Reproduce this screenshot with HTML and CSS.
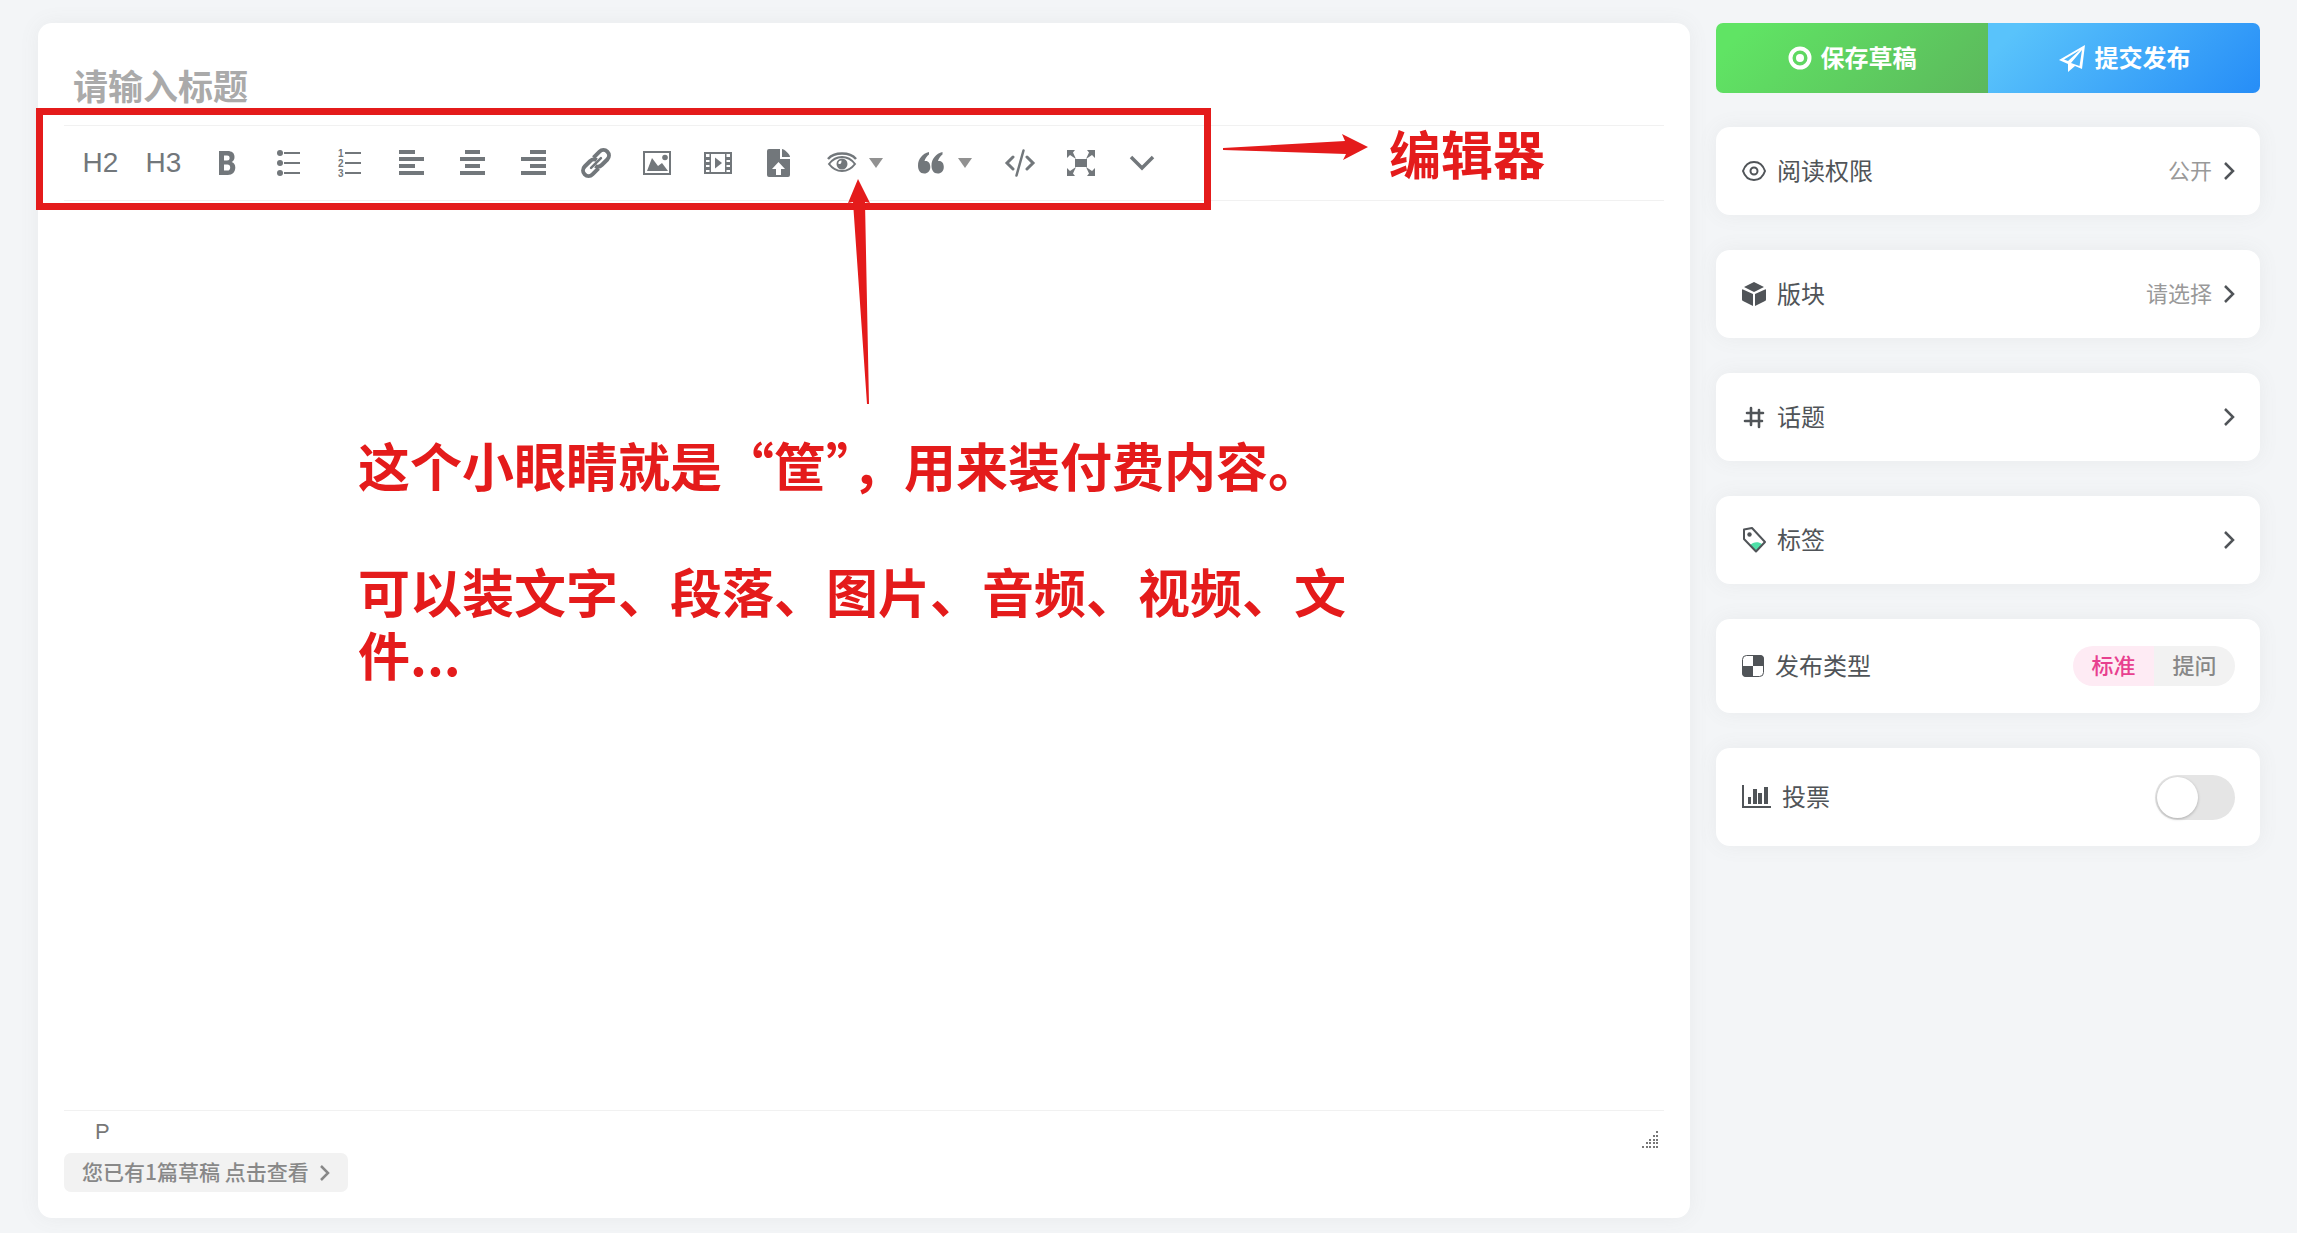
FILE: index.html
```html
<!DOCTYPE html>
<html lang="zh-CN">
<head>
    <meta charset="utf-8">
    <title>发布帖子</title>
    <link rel="stylesheet" href="styles.css">
</head>
<body>
    <div class="container">
        <main class="editor">
            <input type="text" class="title-input" placeholder="请输入标题" aria-label="标题">

            <div class="toolbar">
                <div class="group">
                    <button class="heading">H2</button>
                    <button class="heading">H3</button>
                </div>
                <div class="group">
                    <button aria-label="加粗">
                        <svg width="20" height="24" viewBox="0 0 20 24"><path fill-rule="evenodd" d="M2 0h8.500c4.500 0 7 2 7 6 0 2.400-1 4.200-2.900 5 2.400.8 3.700 2.700 3.700 5.500 0 4.400-2.800 7.500-7.500 7.500H2zM7 4.500V9.500h3c1.800 0 2.600-.8 2.600-2.500S11.800 4.500 10 4.500zM7 13.500v6h3.300c1.900 0 2.900-1.200 2.900-3.100 0-1.900-1-2.900-2.900-2.900z"/></svg>
                    </button>
                </div>
                <div class="group">
                    <button aria-label="项目符号列表">
                        <svg width="24" height="28" viewBox="0 0 24 28"><circle cx="3" cy="4" r="3"/><circle cx="3" cy="14" r="3"/><circle cx="3" cy="24" r="3"/><path d="M7 3h16v2H7zM7 13h16v2H7zM7 23h16v2H7z"/></svg>
                    </button>
                    <button aria-label="编号列表">
                        <svg width="24" height="28" viewBox="0 0 24 28"><text x="0" y="8">1</text><text x="0" y="18">2</text><text x="0" y="28">3</text><path d="M7 3h16v2H7zM7 13h16v2H7zM7 23h16v2H7z"/></svg>
                    </button>
                </div>
                <div class="group">
                    <button aria-label="左对齐">
                        <svg width="25" height="26" viewBox="0 0 25 26"><path d="M0 0h16v4H0zM0 7h25v4H0zM0 14h16v4H0zM0 21h25v4H0z"/></svg>
                    </button>
                    <button aria-label="居中对齐">
                        <svg width="25" height="26" viewBox="0 0 25 26"><path d="M5 0h15v4H5zM0 7h25v4H0zM5 14h15v4H5zM0 21h25v4H0z"/></svg>
                    </button>
                    <button aria-label="右对齐">
                        <svg width="25" height="26" viewBox="0 0 25 26"><path d="M9 0h16v4H9zM0 7h25v4H0zM9 14h16v4H9zM0 21h25v4H0z"/></svg>
                    </button>
                </div>
                <div class="group">
                    <button aria-label="链接">
                        <svg class="line" width="30" height="30" viewBox="0 0 30 30"><g transform="rotate(-45 15 15)" stroke-width="4"><path d="M13 20.500H4.500a5.500 5.500 0 0 1 0-11H12c3 0 5 1.500 5.500 4"/><path d="M17 9.500h8.500a5.500 5.500 0 0 1 0 11H18c-3 0-5-1.500-5.500-4"/><path stroke-width="2.500" stroke-linecap="round" d="M8 15h14"/></g></svg>
                    </button>
                    <button aria-label="图片">
                        <svg width="28" height="24" viewBox="0 0 28 24"><path fill-rule="evenodd" d="M0 0h28v24H0zM2 2v20h24V2z"/><path d="M4 20l5-13 6 8 4-3 6 8z"/><circle cx="22" cy="6.500" r="2.800"/></svg>
                    </button>
                    <button aria-label="视频">
                        <svg width="28" height="22" viewBox="0 0 28 22"><path fill-rule="evenodd" d="M0 0h28v22H0zM7 2v18h14V2zM2 2v3h3.500V2zM2 8v2h3.500V8zM2 13v2h3.500v-2zM2 18v2h3.500v-2zM22.500 2v3H26V2zM22.500 8v2H26V8zM22.500 13v2H26v-2zM22.500 18v2H26v-2z"/><path d="M11 5.500l7 5.500-7 5.500z"/></svg>
                    </button>
                    <button aria-label="文件">
                        <svg width="23" height="28" viewBox="0 0 23 28"><path fill-rule="evenodd" d="M2 0h11v10h10v16a2 2 0 0 1-2 2H2a2 2 0 0 1-2-2V2a2 2 0 0 1 2-2zM11.500 13L5 20h4v6h5v-6h4z"/><path d="M15 0c2 0 8 5 8 8h-8z"/></svg>
                    </button>
                </div>
                <div class="group">
                    <button class="split" aria-label="隐藏内容">
                        <svg width="30" height="22" viewBox="0 0 30 22"><path class="line" stroke-width="2.500" d="M1 7C4 3.500 9 1.500 15 1.500S26 3.500 29 7"/><path class="line" stroke-width="2" d="M2 12c3-4 8-7 13-7s10 3 13 7c-3 4-8 7-13 7S5 16 2 12z"/><path fill-rule="evenodd" d="M15 6.500a5.500 5.500 0 1 1 0 11 5.500 5.500 0 0 1 0-11zM14.500 8.500c-2 0-3.200 1.300-3.200 3 1 1.200 3.400.7 3.200-3z"/></svg>
                        <i class="caret"></i>
                    </button>
                    <button class="split" aria-label="引用">
                        <svg width="30" height="22" viewBox="-2 0 30 22"><path d="M11 0v2.500C9 4 7 6.500 6.500 9c3.700-.7 5.800 2 5.800 6 0 4-2.500 6.500-6 6.500C2 21.500 0 18 0 13.500 0 7 4.500 1.500 11 0zM24.500 0v2.500c-2 1.500-4 4-4.500 6.500 3.700-.7 5.800 2 5.800 6 0 4-2.500 6.500-6 6.500-4.300 0-6.300-3.500-6.300-8C13.500 7 18 1.500 24.500 0z"/></svg>
                        <i class="caret"></i>
                    </button>
                </div>
                <div class="group">
                    <button aria-label="代码">
                        <svg class="line" width="30" height="28" viewBox="0 0 30 28"><path stroke-width="3" stroke-linecap="round" d="M8 8l-6 6 6 6M22 8l6 6-6 6"/><path stroke-width="2.500" stroke-linecap="round" d="M18.500 1.500l-7 25"/></svg>
                    </button>
                    <button aria-label="全屏">
                        <svg width="30" height="26" viewBox="0 0 30 26"><path d="M9 9h12v8H9z"/><path d="M1 0h8L7 2.500l3 6.500-6-4-3 3zM29 0h-8l2 2.500L20 9l6-4 3 3zM1 26h8l-2-2.500 3-6.500-6 4-3-3zM29 26h-8l2-2.500-3-6.500 6 4 3-3z"/></svg>
                    </button>
                    <button aria-label="更多">
                        <svg class="line" width="24" height="16" viewBox="0 0 24 16"><path stroke-width="3.500" d="M1 2l11 11L23 2"/></svg>
                    </button>
                </div>

                <!-- red marks drawn over the toolbar -->
                <div class="mark-box"></div>
                <svg class="mark-arrow-right" width="145" height="28" viewBox="0 0 145 28"><path d="M0 15l122-7-3-7 26 13-25 13 3-6L0 17z"/></svg>
                <svg class="mark-arrow-up" width="26" height="226" viewBox="0 0 26 226"><path d="M12 0l12 24-5-1 4 202h-2L7 23l-5 1z"/></svg>
                <strong class="mark-label">编辑器</strong>
            </div>

            <div class="content" contenteditable="true">
                <p>这个小眼睛就是“筐”，用来装付费内容。</p>
                <p>可以装文字、段落、图片、音频、视频、文件...</p>
            </div>

            <div class="status">
                <span>P</span>
                <svg width="18" height="18" viewBox="0 0 18 18"><path d="M14 0h2v2h-2zM11 4h2v2h-2zM14 4h2v2h-2zM7 8h2v2H7zM11 8h2v2h-2zM14 8h2v2h-2zM4 11h2v2H4zM7 11h2v2H7zM11 11h2v2h-2zM14 11h2v2h-2zM0 15h2v2H0zM4 15h2v2H4zM7 15h2v2H7zM11 15h2v2h-2zM14 15h2v2h-2z"/></svg>
            </div>
            <a href="#" class="draft">
                <span class="text">您已有1篇草稿 点击查看</span>
                <svg class="line" width="10" height="16" viewBox="0 0 10 16"><path stroke-width="2.500" d="M1 1l7 7-7 7"/></svg>
            </a>
        </main>

        <aside class="sidebar">
            <div class="actions">
                <button class="save">
                    <svg width="24" height="24" viewBox="0 0 24 24"><circle class="line" cx="12" cy="12" r="9.500" stroke-width="4"/><circle cx="12" cy="12" r="4"/></svg>
                    <span class="text">保存草稿</span>
                </button>
                <button class="publish">
                    <svg width="28" height="28" viewBox="0 0 28 28"><path fill-rule="evenodd" d="M27 1l-3 24-7-3-7 6v-8L1 16zM22 6L6 15.500l4 1.500zM24 6L13 19l8.500 3z"/></svg>
                    <span class="text">提交发布</span>
                </button>
            </div>

            <button class="card">
                <svg class="line" width="24" height="24" viewBox="0 0 24 24"><path stroke-width="2" d="M1 12c2-6 6-9 11-9s9 3 11 9c-2 6-6 9-11 9S3 18 1 12z"/><circle cx="12" cy="12" r="3.500" stroke-width="2"/></svg>
                <span class="name text">阅读权限</span>
                <span class="value text">公开</span>
                <svg class="line" width="12" height="18" viewBox="0 0 12 18"><path stroke-width="2.500" d="M2 1l8 8-8 8"/></svg>
            </button>

            <button class="card">
                <svg width="24" height="26" viewBox="0 0 24 26"><path d="M12 1l10 5-10 5L2 6zM0 9q0-1 1-.5L11 13v12L1 20q-1-.5-1-1.500zM24 9q0-1-1-.5L13 13v12l10-5q1-.5 1-1.500z"/></svg>
                <span class="name text">版块</span>
                <span class="value text">请选择</span>
                <svg class="line" width="12" height="18" viewBox="0 0 12 18"><path stroke-width="2.500" d="M2 1l8 8-8 8"/></svg>
            </button>

            <button class="card">
                <svg class="line" width="24" height="24" viewBox="0 0 24 24"><path stroke-width="2.600" stroke-linecap="round" d="M9 3v17M17 5v17M5 8h16M3 16h17"/></svg>
                <span class="name text">话题</span>
                <svg class="line" width="12" height="18" viewBox="0 0 12 18"><path stroke-width="2.500" d="M2 1l8 8-8 8"/></svg>
            </button>

            <button class="card">
                <svg width="24" height="26" viewBox="0 0 24 26"><path class="green" d="M8 18c3-3 8-4 12-1l-6 8z"/><path class="line" stroke-width="2" stroke-linejoin="round" d="M2 2.500L10 1l13 14-9 9.500L2 12z"/><circle cx="7.500" cy="7.500" r="2.200"/></svg>
                <span class="name text">标签</span>
                <svg class="line" width="12" height="18" viewBox="0 0 12 18"><path stroke-width="2.500" d="M2 1l8 8-8 8"/></svg>
            </button>

            <div class="card type">
                <svg width="22" height="22" viewBox="0 0 22 22"><rect class="line" x="0.500" y="0.500" width="21" height="21" rx="4" stroke-width="1"/><path d="M11 0h7a4 4 0 0 1 4 4v7H11zM0 11h11v11H4a4 4 0 0 1-4-4z"/></svg>
                <span class="name text">发布类型</span>
                <div class="pill">
                    <label><input type="radio" name="type" checked><span>标准</span></label>
                    <label><input type="radio" name="type"><span>提问</span></label>
                </div>
            </div>

            <div class="card vote">
                <svg width="29" height="24" viewBox="0 0 29 24"><path d="M0 0h2v21h27v2H0zM6 12h3v7H6zM11 4h4v15h-4zM16 8h4v11h-4zM22 2h4v17h-4z"/></svg>
                <label class="name text" for="vote">投票</label>
                <input type="checkbox" id="vote" class="switch">
            </div>
        </aside>
    </div>
</body>
</html>
```

FILE: styles.css
```css
* {
    box-sizing: border-box;
}
body {
    margin: 0;
    background-color: #f3f5f7;
    color: #505458;
    font-family: "Noto Sans CJK SC", "Noto Sans", sans-serif;
    font-size: 24px;
}
button,
input {
    font: inherit;
    color: inherit;
}
button {
    border: none;
    padding: 0;
    background: none;
    cursor: pointer;
}
svg {
    display: block;
    flex: none;
    fill: currentColor;
    overflow: visible;
}
.line {
    fill: none;
    stroke: currentColor;
}
.text {
    padding-bottom: 4px; /* Lifts the characters to the middle of the row */
}
.container {
    display: flex;
    gap: 26px;
    min-height: 100vh;
    padding: 23px 37px 15px 38px;
}

/* Editor */
.editor {
    flex: 1;
    display: flex;
    flex-direction: column;
    padding: 26px;
    background-color: #fff;
    border-radius: 14px;
    box-shadow: 0 0 20px rgba(110, 120, 120, 0.08);
}
.title-input {
    height: 77px;
    padding: 0 9px 6px;
    border: none;
    border-bottom: 1px solid #f1f1f1;
    outline: none;
    font-size: 35px;
    font-weight: bold;
}
.title-input::placeholder {
    color: #aaa;
    opacity: 1;
}
.toolbar {
    position: relative; /* Holds the red marks */
    display: flex;
    gap: 1px;
    height: 75px;
    padding-left: 5px;
    border-bottom: 1px solid #f1f1f1;
    color: #72777b;
}
.group {
    display: flex;
}
.toolbar button {
    display: flex;
    align-items: center;
    justify-content: center;
    width: 61px;
}
.toolbar .heading {
    width: 63px;
    font-family: "Liberation Sans", Arial, sans-serif;
    font-size: 28px;
}
.toolbar .split {
    width: 89px;
    gap: 12px;
}
.toolbar text {
    font-family: "Liberation Sans", Arial, sans-serif;
    font-size: 10px;
    font-weight: bold;
}
.caret {
    border: 7px solid transparent;
    border-top: 10px solid #919191;
    border-bottom: none;
}

/* Red marks */
.mark-box {
    position: absolute;
    top: -18px;
    left: -28px;
    width: 1175px;
    height: 102px;
    border: 7px solid #e41b1b;
    pointer-events: none;
}
.mark-arrow-right {
    position: absolute;
    top: 7px;
    left: 1159px;
    color: #e41b1b;
}
.mark-arrow-up {
    position: absolute;
    top: 53px;
    left: 782px;
    color: #e41b1b;
}
.mark-label {
    position: absolute;
    top: -3px;
    left: 1325px;
    line-height: 60px;
    font-size: 52px;
    color: #e41b1b;
}

.content {
    flex: 1;
    padding: 232px 294px 0;
    outline: none;
    font-size: 52px;
    font-weight: bold;
    line-height: 63px;
    color: #e41b1b;
}
.content p {
    max-width: 1010px;
    margin: 0 0 63px;
}
.status {
    display: flex;
    align-items: center;
    justify-content: space-between;
    height: 43px;
    padding: 0 4px 0 31px;
    border-top: 1px solid #f1f1f1;
    font-family: "Liberation Sans", Arial, sans-serif;
    font-size: 22px;
    color: #777;
}
.status svg {
    margin-top: 15px;
}
.draft {
    display: flex;
    align-items: center;
    align-self: flex-start;
    gap: 11px;
    height: 39px;
    padding: 0 18px;
    border-radius: 7px;
    background-color: #f2f2f2;
    color: #888;
    font-size: 21px;
    font-weight: 500;
    text-decoration: none;
}

/* Sidebar */
.sidebar {
    width: 544px;
}
.actions {
    display: flex;
    height: 70px;
    margin-bottom: 34px;
    border-radius: 7px;
    overflow: hidden;
}
.actions button {
    flex: 1;
    display: flex;
    align-items: center;
    justify-content: center;
    gap: 9px;
    color: #fff;
    font-weight: bold;
}
.save {
    background: linear-gradient(135deg, #60e464 10%, #5cb85c);
}
.publish {
    background: linear-gradient(135deg, #59c3fb 10%, #268df7);
}
.card {
    display: flex;
    align-items: center;
    gap: 11px;
    width: 100%;
    height: 88px;
    margin-bottom: 35px;
    padding: 0 25px 0 26px;
    border-radius: 14px;
    background-color: #fff;
    box-shadow: 0 0 20px rgba(110, 120, 120, 0.08);
    text-align: left;
}
.card.type {
    height: 94px;
}
.card.vote {
    height: 98px;
}
.name {
    flex: 1;
}
.value {
    color: #999;
    font-size: 22px;
}
.green {
    fill: #4fe0a8;
}
.pill {
    display: flex;
    border-radius: 20px;
    overflow: hidden;
    font-size: 22px;
    font-weight: 500;
}
.pill input {
    position: absolute;
    opacity: 0;
}
.pill span {
    display: block;
    width: 81px;
    height: 40px;
    line-height: 36px;
    text-align: center;
    background-color: #f2f2f2;
    color: #888;
    cursor: pointer;
}
.pill input:checked + span {
    background-color: #feebf4;
    color: #e8408f;
}
.switch {
    appearance: none;
    width: 80px;
    height: 45px;
    margin: 0;
    padding: 2px;
    border-radius: 23px;
    background-color: #e5e5e5;
    cursor: pointer;
}
.switch::before {
    content: "";
    display: block;
    width: 41px;
    height: 41px;
    border-radius: 50%;
    background-color: #fff;
    box-shadow: 0 1px 3px rgba(0, 0, 0, 0.25);
}
.switch:checked {
    background-color: #60e464;
}
.switch:checked::before {
    margin-left: auto;
}
```
